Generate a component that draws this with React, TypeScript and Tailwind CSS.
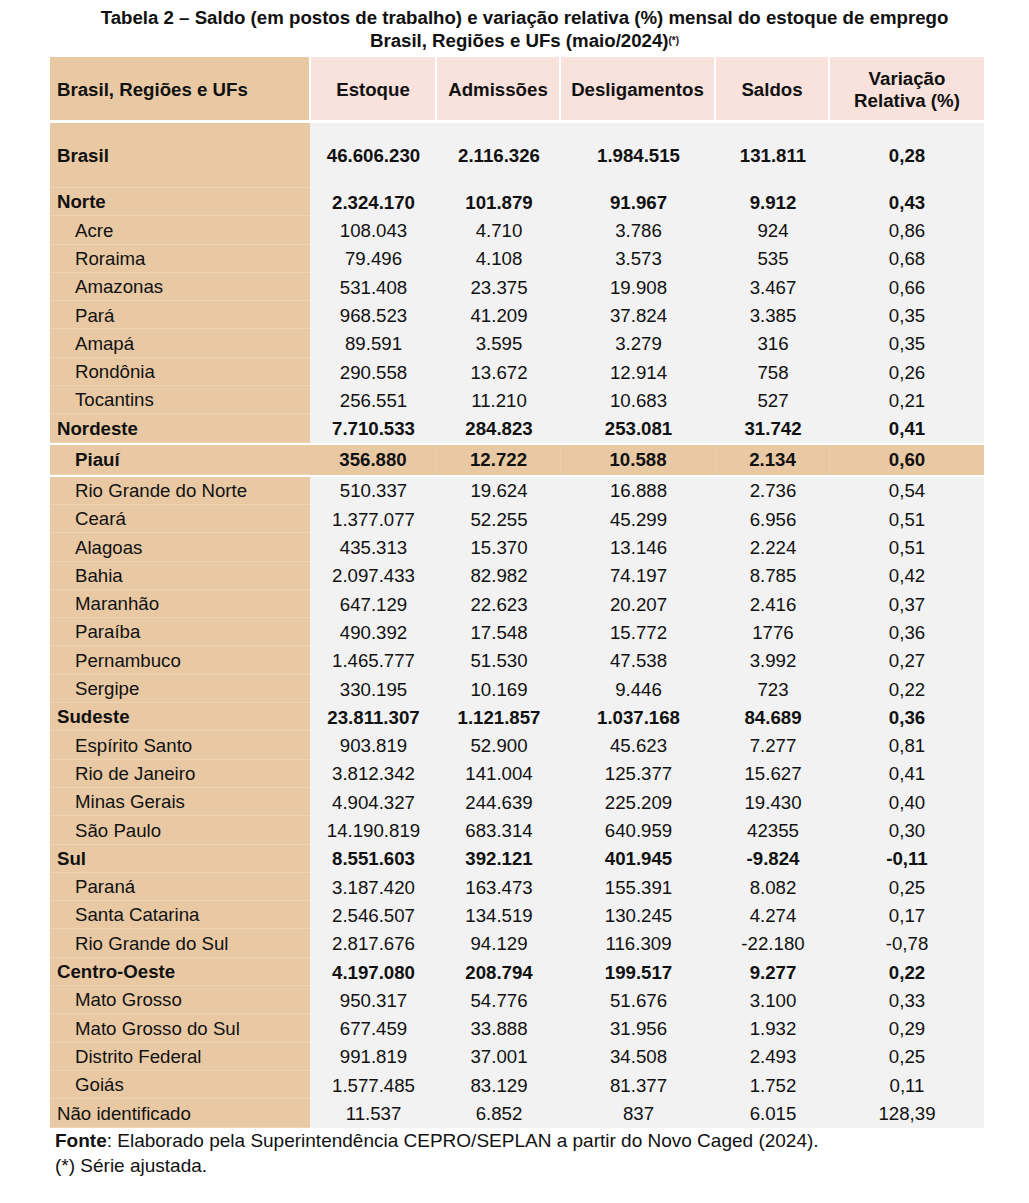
import React from "react";

type Kind = "brasil" | "region" | "state" | "highlight" | "plain";

type Row = {
    name: string;
    values: [string, string, string, string, string];
    kind: Kind;
};

const rows: Row[] = [
    { name: "Brasil", values: ["46.606.230", "2.116.326", "1.984.515", "131.811", "0,28"], kind: "brasil" },
    { name: "Norte", values: ["2.324.170", "101.879", "91.967", "9.912", "0,43"], kind: "region" },
    { name: "Acre", values: ["108.043", "4.710", "3.786", "924", "0,86"], kind: "state" },
    { name: "Roraima", values: ["79.496", "4.108", "3.573", "535", "0,68"], kind: "state" },
    { name: "Amazonas", values: ["531.408", "23.375", "19.908", "3.467", "0,66"], kind: "state" },
    { name: "Pará", values: ["968.523", "41.209", "37.824", "3.385", "0,35"], kind: "state" },
    { name: "Amapá", values: ["89.591", "3.595", "3.279", "316", "0,35"], kind: "state" },
    { name: "Rondônia", values: ["290.558", "13.672", "12.914", "758", "0,26"], kind: "state" },
    { name: "Tocantins", values: ["256.551", "11.210", "10.683", "527", "0,21"], kind: "state" },
    { name: "Nordeste", values: ["7.710.533", "284.823", "253.081", "31.742", "0,41"], kind: "region" },
    { name: "Piauí", values: ["356.880", "12.722", "10.588", "2.134", "0,60"], kind: "highlight" },
    { name: "Rio Grande do Norte", values: ["510.337", "19.624", "16.888", "2.736", "0,54"], kind: "state" },
    { name: "Ceará", values: ["1.377.077", "52.255", "45.299", "6.956", "0,51"], kind: "state" },
    { name: "Alagoas", values: ["435.313", "15.370", "13.146", "2.224", "0,51"], kind: "state" },
    { name: "Bahia", values: ["2.097.433", "82.982", "74.197", "8.785", "0,42"], kind: "state" },
    { name: "Maranhão", values: ["647.129", "22.623", "20.207", "2.416", "0,37"], kind: "state" },
    { name: "Paraíba", values: ["490.392", "17.548", "15.772", "1776", "0,36"], kind: "state" },
    { name: "Pernambuco", values: ["1.465.777", "51.530", "47.538", "3.992", "0,27"], kind: "state" },
    { name: "Sergipe", values: ["330.195", "10.169", "9.446", "723", "0,22"], kind: "state" },
    { name: "Sudeste", values: ["23.811.307", "1.121.857", "1.037.168", "84.689", "0,36"], kind: "region" },
    { name: "Espírito Santo", values: ["903.819", "52.900", "45.623", "7.277", "0,81"], kind: "state" },
    { name: "Rio de Janeiro", values: ["3.812.342", "141.004", "125.377", "15.627", "0,41"], kind: "state" },
    { name: "Minas Gerais", values: ["4.904.327", "244.639", "225.209", "19.430", "0,40"], kind: "state" },
    { name: "São Paulo", values: ["14.190.819", "683.314", "640.959", "42355", "0,30"], kind: "state" },
    { name: "Sul", values: ["8.551.603", "392.121", "401.945", "-9.824", "-0,11"], kind: "region" },
    { name: "Paraná", values: ["3.187.420", "163.473", "155.391", "8.082", "0,25"], kind: "state" },
    { name: "Santa Catarina", values: ["2.546.507", "134.519", "130.245", "4.274", "0,17"], kind: "state" },
    { name: "Rio Grande do Sul", values: ["2.817.676", "94.129", "116.309", "-22.180", "-0,78"], kind: "state" },
    { name: "Centro-Oeste", values: ["4.197.080", "208.794", "199.517", "9.277", "0,22"], kind: "region" },
    { name: "Mato Grosso", values: ["950.317", "54.776", "51.676", "3.100", "0,33"], kind: "state" },
    { name: "Mato Grosso do Sul", values: ["677.459", "33.888", "31.956", "1.932", "0,29"], kind: "state" },
    { name: "Distrito Federal", values: ["991.819", "37.001", "34.508", "2.493", "0,25"], kind: "state" },
    { name: "Goiás", values: ["1.577.485", "83.129", "81.377", "1.752", "0,11"], kind: "state" },
    { name: "Não identificado", values: ["11.537", "6.852", "837", "6.015", "128,39"], kind: "plain" },
];

// widths of the five number columns in the body (gray area)
const bodyWidths = ["w-[127px]", "w-[124px]", "w-[155px]", "w-[114px]", "w-[154px]"];

const TableRow: React.FC<{ row: Row }> = ({ row }) => {
    const bold = row.kind !== "state" && row.kind !== "plain";
    const indent = row.kind === "state" || row.kind === "highlight";
    const highlight = row.kind === "highlight";

    const height =
        row.kind === "brasil" ? "h-[65px]" : highlight ? "h-[30px] my-[2px]" : "h-[28.3px]";

    return (
        <div className={`flex ${height} ${bold ? "font-bold" : ""}`}>
            <div
                className={`w-[260px] flex items-center pt-[2px] bg-[#e9c9a4] border-b border-[#eed4b5] ${
                    indent ? "pl-[25px]" : "pl-[7px]"
                }`}
            >
                {row.name}
            </div>
            {row.values.map((value, index) => (
                <div
                    key={index}
                    className={`${bodyWidths[index]} flex items-center justify-center pt-[2px] ${
                        highlight
                            ? "bg-[#e9c9a4] border-r border-[#eccfad] last:border-r-0"
                            : "bg-[#f2f2f2]"
                    }`}
                >
                    {value}
                </div>
            ))}
        </div>
    );
};

export default function App() {
    return (
        <div
            className="w-[1029px] min-h-[1203px] bg-white text-[#111] text-[18.67px] leading-none"
            style={{ fontFamily: '"Liberation Sans", Arial, sans-serif' }}
        >
            <div className="pt-[6px] pl-[20px] text-center font-bold text-[18.67px] leading-[23px]">
                <div>Tabela 2 – Saldo (em postos de trabalho) e variação relativa (%) mensal do estoque de emprego</div>
                <div>
                    Brasil, Regiões e UFs (maio/2024)
                    <sup className="text-[10px] relative -top-[3px]">(*)</sup>
                </div>
            </div>

            <div className="ml-[50px] mt-[5px] w-[934px]">
                {/* header */}
                <div className="flex h-[63px] font-bold">
                    <div className="w-[261px] border-r-2 border-white bg-[#e9c9a4] flex items-center pt-[3px] pl-[7px]">
                        Brasil, Regiões e UFs
                    </div>
                    <div className="w-[126px] border-r-2 border-white bg-[#f9e2dc] flex items-center justify-center pt-[3px]">
                        Estoque
                    </div>
                    <div className="w-[124px] border-r-2 border-white bg-[#f9e2dc] flex items-center justify-center pt-[3px]">
                        Admissões
                    </div>
                    <div className="w-[155px] border-r-2 border-white bg-[#f9e2dc] flex items-center justify-center pt-[3px]">
                        Desligamentos
                    </div>
                    <div className="w-[114px] border-r-2 border-white bg-[#f9e2dc] flex items-center justify-center pt-[3px]">
                        Saldos
                    </div>
                    <div className="w-[154px] bg-[#f9e2dc] flex items-center justify-center text-center pt-[3px] leading-[22px]">
                        Variação
                        <br />
                        Relativa (%)
                    </div>
                </div>

                <div className="mt-[3px]">
                    {rows.map((row) => (
                        <TableRow key={row.name} row={row} />
                    ))}
                </div>

                <div className="pl-[5px] pt-[0px] text-[19px] leading-[25px]">
                    <div>
                        <span className="font-bold">Fonte</span>: Elaborado pela Superintendência CEPRO/SEPLAN a
                        partir do Novo Caged (2024).
                    </div>
                    <div>(*) Série ajustada.</div>
                </div>
            </div>
        </div>
    );
}
